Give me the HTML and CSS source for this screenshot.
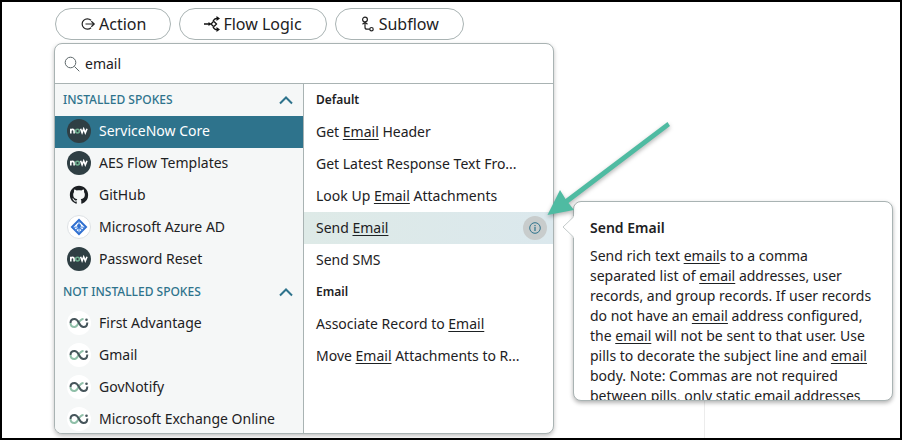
FILE: index.html
```html
<!DOCTYPE html>
<html lang="en">
<head>
<meta charset="utf-8">
<title>Flow Designer</title>
<link rel="stylesheet" href="styles.css">
</head>
<body>
<svg class="sprite" aria-hidden="true">
  <symbol id="now" viewBox="0 0 24 24">
    <circle cx="12" cy="12" r="12" fill="#2f3f44"/>
    <g fill="none" stroke="#fff" stroke-width="1.6">
      <path d="M3.800 14.500V9.800M3.800 12.200c0-2.400 3.300-2.400 3.300 0v2.300"/>
      <path d="M13.600 9.800l1.500 4 1.600-4 1.600 4 1.700-4"/>
      <circle cx="10.500" cy="12.100" r="1.900" stroke="#6fae90"/>
    </g>
  </symbol>
  <symbol id="spoke" viewBox="0 0 24 24">
    <circle cx="12" cy="12" r="12" fill="#fff"/>
    <g fill="none" stroke-width="2">
      <path d="M3.500 12C3.500 15 5.500 16 7.500 16C12 16 11 8 16.500 8" stroke="#8fbfa8"/>
      <path d="M3.500 12C3.500 9 5.500 8 7.500 8C12.500 8 11.500 16 16.500 16C19 16 20.300 14.200 20.300 11.500" stroke="#46555b"/>
    </g>
    <circle cx="19.500" cy="8.800" r="1.300" fill="#46555b"/>
  </symbol>
  <symbol id="chevron" viewBox="0 0 14 10">
    <path d="M1 8.500L7 2.500L13 8.500" fill="none" stroke="#2e738c" stroke-width="2"/>
  </symbol>
</svg>

<nav class="kinds">
  <button class="kind" type="button">
    <svg class="kind-icon" viewBox="0 0 16 16"><path d="M11 4.300A5.200 5.200 0 1 0 11 11.700M5.500 8H14M11.300 5.300L14.200 8L11.300 10.700" fill="none" stroke="#222" stroke-width="1.200"/></svg>
    Action
  </button>
  <button class="kind" type="button">
    <svg class="kind-icon" viewBox="0 0 16 16"><path d="M0 8H6M9.500 5.500L7 8L9.500 10.500M9 5.300C10 3 11 2.300 13 2.300M9 10.700C10 13 11 13.700 13 13.700M10 5.500L12.500 8L10 10.500" fill="none" stroke="#111" stroke-width="1.300"/><path d="M12.500 0L16 2.500L12.500 5zM12.500 11L16 13.500L12.500 16zM4.500 6L7.500 8L4.500 10z" fill="#111"/></svg>
    Flow Logic
  </button>
  <button class="kind" type="button">
    <svg class="kind-icon" viewBox="0 0 16 16"><g fill="none" stroke="#222" stroke-width="1.200"><circle cx="5" cy="3.500" r="2.400"/><circle cx="11.500" cy="13.200" r="1.700"/><path d="M5 6V11.200Q5 13.200 7 13.200H9.800M2.500 8.200L5 6.300L7.500 8.200"/></g></svg>
    Subflow
  </button>
</nav>

<main class="workspace">
  <section class="picker">
    <label class="search">
      <svg class="search-icon" viewBox="0 0 16 16"><g fill="none" stroke="#5c6669"><circle cx="6.500" cy="6.500" r="5.300"/><path d="M10.500 10.500L15.300 15.300"/></g></svg>
      <input class="search-box" type="text" value="email" aria-label="Search">
    </label>
    <div class="columns">
      <div class="spokes">
        <button class="group" type="button">INSTALLED SPOKES<svg class="chevron"><use href="#chevron"/></svg></button>
        <button class="spoke selected" type="button"><svg class="logo"><use href="#now"/></svg>ServiceNow Core</button>
        <button class="spoke" type="button"><svg class="logo"><use href="#now"/></svg>AES Flow Templates</button>
        <button class="spoke" type="button"><svg class="logo" viewBox="-2.500 -2.500 21 21"><path fill="#1b1f23" d="M8 0C3.580 0 0 3.580 0 8c0 3.540 2.290 6.530 5.470 7.590.4.070.55-.17.55-.38 0-.19-.01-.82-.01-1.490-2.010.37-2.530-.49-2.690-.94-.09-.23-.48-.94-.82-1.130-.28-.15-.68-.52-.01-.53.63-.01 1.080.58 1.230.82.72 1.210 1.870.87 2.330.66.07-.52.28-.87.51-1.070-1.780-.2-3.640-.89-3.640-3.950 0-.87.31-1.590.82-2.150-.08-.2-.36-1.020.08-2.120 0 0 .67-.21 2.200.82.64-.18 1.320-.27 2-.27s1.360.09 2 .27c1.530-1.040 2.200-.82 2.200-.82.44 1.100.16 1.920.08 2.120.51.56.82 1.270.82 2.150 0 3.070-1.870 3.750-3.650 3.950.29.25.54.73.54 1.480 0 1.070-.01 1.930-.01 2.200 0 .21.15.46.55.38A8.010 8.010 0 0 0 16 8c0-4.420-3.580-8-8-8z"/></svg>GitHub</button>
        <button class="spoke" type="button"><svg class="logo" viewBox="0 0 24 24"><circle cx="12" cy="12" r="11.500" fill="#fff" stroke="#dde1e4"/><path d="M12 5L19 12L12 19L5 12z" fill="#fff" stroke="#2f6fd0" stroke-width="2"/><path d="M12 6V10M6 12.500L10 12M18 12.500L14 12M8.500 15.500L12 12L15.500 15.500M12 12V18" stroke="#4f8ae0" stroke-width="1.200" fill="none"/><circle cx="12" cy="11" r="2" fill="#2f6fd0"/></svg>Microsoft Azure AD</button>
        <button class="spoke" type="button"><svg class="logo"><use href="#now"/></svg>Password Reset</button>
        <button class="group" type="button">NOT INSTALLED SPOKES<svg class="chevron"><use href="#chevron"/></svg></button>
        <button class="spoke" type="button"><svg class="logo"><use href="#spoke"/></svg>First Advantage</button>
        <button class="spoke" type="button"><svg class="logo"><use href="#spoke"/></svg>Gmail</button>
        <button class="spoke" type="button"><svg class="logo"><use href="#spoke"/></svg>GovNotify</button>
        <button class="spoke" type="button"><svg class="logo"><use href="#spoke"/></svg>Microsoft Exchange Online</button>
      </div>
      <div class="actions">
        <h2 class="heading">Default</h2>
        <div class="row"><button class="action" type="button">Get <u>Email</u> Header</button></div>
        <div class="row"><button class="action" type="button">Get Latest Response Text Fro...</button></div>
        <div class="row"><button class="action" type="button">Look Up <u>Email</u> Attachments</button></div>
        <div class="row current">
          <button class="action" type="button">Send <u>Email</u></button>
          <button class="info" type="button" aria-label="Details"><svg class="info-icon" viewBox="0 0 12 12"><circle cx="6" cy="6" r="5.300" fill="none" stroke="#2e738c"/><path d="M6 5V9M6 3V4.200" stroke="#2e738c" stroke-width="1.200"/></svg></button>
          <aside class="tip">
            <div class="tip-body">
              <h3 class="tip-title">Send Email</h3>
              <p class="tip-text">Send rich text <u>email</u>s to a comma separated list of <u>email</u> addresses, user records, and group records. If user records do not have an <u>email</u> address configured, the <u>email</u> will not be sent to that user. Use pills to decorate the subject line and <u>email</u> body. Note: Commas are not required between pills, only static email addresses</p>
            </div>
            <svg class="caret" viewBox="0 0 12 22"><path d="M11.500 0V1L1 11L11.500 21V22H12V0z" fill="#fff"/><path d="M11.500 1L1 11L11.500 21" fill="none" stroke="#c3caca"/></svg>
          </aside>
          <svg class="pointer" viewBox="0 0 140 110" aria-hidden="true"><path d="M7.500 100L20 75L25.500 84L127.500 7L130 11L28.500 88L34 95z" fill="#4fbba2"/></svg>
        </div>
        <div class="row"><button class="action" type="button">Send SMS</button></div>
        <h2 class="heading">Email</h2>
        <div class="row"><button class="action" type="button">Associate Record to <u>Email</u></button></div>
        <div class="row"><button class="action" type="button">Move <u>Email</u> Attachments to R...</button></div>
      </div>
    </div>
  </section>
  <div class="canvas"></div>
</main>
</body>
</html>
```
FILE: styles.css
```css
* {
  box-sizing: border-box;
}

body {
  display: flex;
  flex-direction: column;
  gap: 3px;
  height: 100vh;
  margin: 0;
  padding: 6px 6px 4px 52px;
  overflow: hidden;
  border: 2px solid #000;
  background: #fff;
  color: #1d2123;
  font: 14px/20px "Noto Sans", sans-serif;
}

button,
input {
  margin: 0;
  padding: 0;
  border: 0;
  background: none;
  color: inherit;
  font: inherit;
}

h2,
h3,
p {
  margin: 0;
}

u {
  text-underline-offset: 2px;
}

.sprite {
  position: absolute;
  width: 0;
  height: 0;
}

.kinds {
  display: flex;
  gap: 8px;
  padding-left: 1px;
}

.kind {
  display: flex;
  align-items: center;
  gap: 3px;
  height: 32px;
  padding: 0 24px;
  border: 1px solid #a9b3b3;
  border-radius: 16px;
  background: #fff;
  font-size: 16px;
}

.kind-icon {
  width: 16px;
  height: 16px;
}

.workspace {
  display: grid;
  grid-template-columns: 500fr 340fr;
  flex: 1;
  min-height: 0;
}

.picker {
  display: flex;
  flex-direction: column;
  min-height: 0;
  border: 1px solid #a9b3b3;
  border-radius: 8px;
  background: #fff;
  box-shadow: 0 2px 4px rgba(0, 0, 0, 0.25);
}

.search {
  display: flex;
  align-items: center;
  gap: 5px;
  height: 40px;
  padding: 0 9px;
  border-bottom: 1px solid #a9b3b3;
}

.search-icon {
  width: 16px;
  height: 16px;
}

.search-box {
  flex: 1;
  outline: 0;
}

.columns {
  display: grid;
  grid-template-columns: 1fr 1fr;
  flex: 1;
  min-height: 0;
}

.spokes {
  overflow: hidden;
  border-right: 1px solid #a9b3b3;
  border-bottom-left-radius: 7px;
  background: #f5f7f7;
}

.group {
  display: flex;
  align-items: center;
  justify-content: space-between;
  width: 100%;
  height: 32px;
  padding: 0 10px 0 8px;
  color: #2e738c;
  font-size: 12px;
  font-weight: 500;
}

.chevron {
  width: 14px;
  height: 10px;
}

.spoke {
  display: flex;
  align-items: center;
  gap: 8px;
  width: 100%;
  height: 32px;
  padding: 0 12px 2px;
  white-space: nowrap;
}

.selected {
  background: #2e738c;
  color: #fff;
}

.logo {
  width: 24px;
  height: 24px;
}

.heading {
  padding: 6px 12px;
  font-size: 12px;
  font-weight: 600;
}

.row {
  display: flex;
  align-items: center;
  position: relative;
  height: 32px;
  padding: 0 6px 0 12px;
}

.current {
  background: linear-gradient(90deg, #deeae7, #dbe8ed);
}

.action {
  flex: 1;
  height: 32px;
  text-align: left;
  white-space: nowrap;
}

.info {
  display: grid;
  place-items: center;
  width: 24px;
  height: 24px;
  border-radius: 12px;
  background: #c8cccc;
}

.info-icon {
  width: 12px;
  height: 12px;
}

.tip {
  position: absolute;
  top: -11px;
  left: calc(100% + 20px);
  width: 320px;
}

.tip-body {
  height: 200px;
  padding: 16px;
  overflow: hidden;
  border: 1px solid #a9b3b3;
  border-radius: 8px;
  background: #fff;
  box-shadow: 0 2px 4px rgba(0, 0, 0, 0.3);
}

.tip-title {
  margin-bottom: 8px;
  font-size: 14px;
  font-weight: 600;
}

.caret {
  position: absolute;
  top: 15px;
  left: -11px;
  width: 12px;
  height: 22px;
}

.pointer {
  position: absolute;
  top: -97px;
  left: calc(100% - 13px);
  width: 140px;
  height: 110px;
  filter: drop-shadow(0 2px 2px rgba(0, 0, 0, 0.3));
}

.canvas {
  margin: 358px 0 -4px 150px;
  border-left: 1px solid #ececec;
}
```
